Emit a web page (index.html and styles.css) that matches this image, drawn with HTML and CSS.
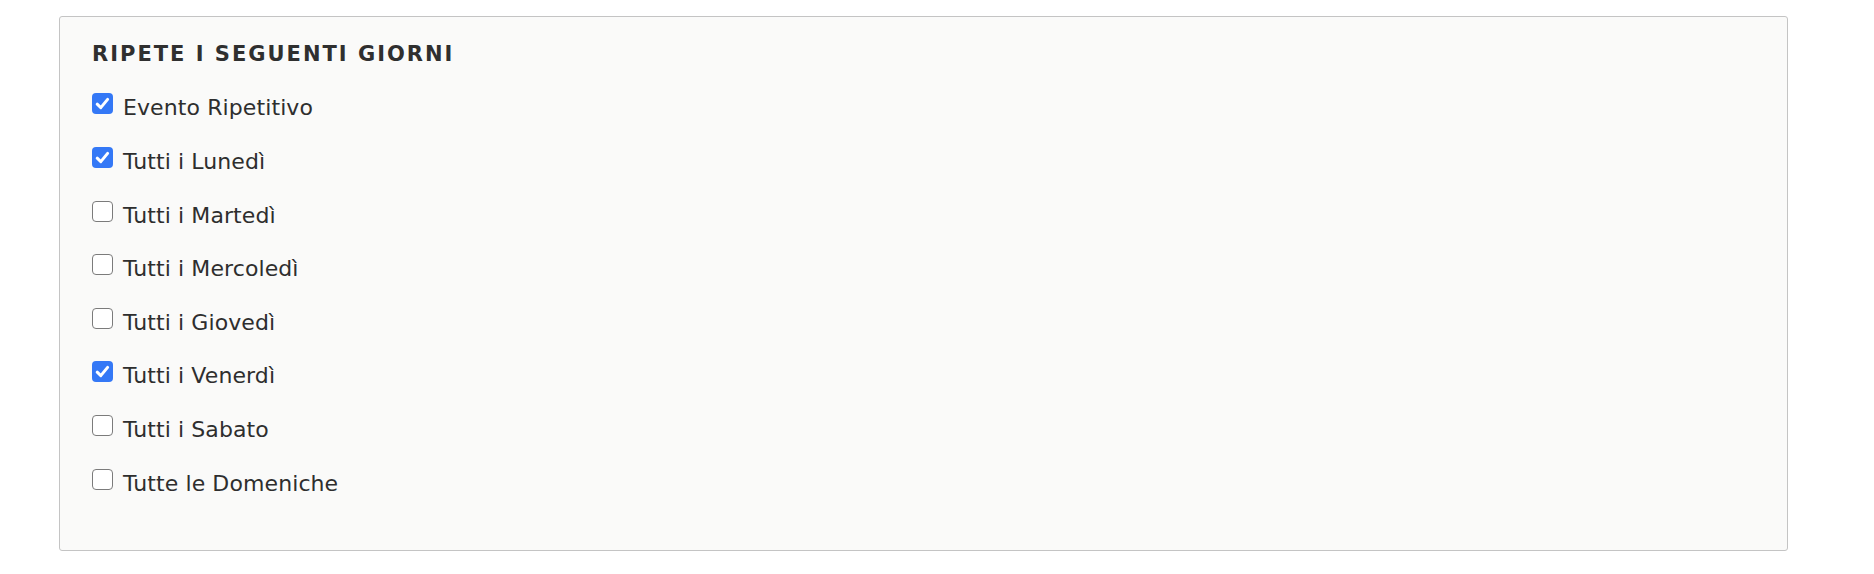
FILE: index.html
```html
<!DOCTYPE html>
<html lang="it">
<head>
<meta charset="utf-8">
<title>Ripete i seguenti giorni</title>
<link rel="stylesheet" href="styles.css">
</head>
<body>
<section class="panel">
  <h2 class="panel-title">RIPETE I SEGUENTI GIORNI</h2>
  <ul class="options">
    <li class="option"><span class="box checked"><svg viewBox="0 0 21 21" width="21" height="21"><path d="M5.2 11.2 L8.8 14.6 L15.6 6.4" fill="none" stroke="#fff" stroke-width="3" stroke-linecap="round" stroke-linejoin="round"/></svg></span><span class="label">Evento Ripetitivo</span></li>
    <li class="option"><span class="box checked"><svg viewBox="0 0 21 21" width="21" height="21"><path d="M5.2 11.2 L8.8 14.6 L15.6 6.4" fill="none" stroke="#fff" stroke-width="3" stroke-linecap="round" stroke-linejoin="round"/></svg></span><span class="label">Tutti i Lunedì</span></li>
    <li class="option"><span class="box"></span><span class="label">Tutti i Martedì</span></li>
    <li class="option"><span class="box"></span><span class="label">Tutti i Mercoledì</span></li>
    <li class="option"><span class="box"></span><span class="label">Tutti i Giovedì</span></li>
    <li class="option"><span class="box checked"><svg viewBox="0 0 21 21" width="21" height="21"><path d="M5.2 11.2 L8.8 14.6 L15.6 6.4" fill="none" stroke="#fff" stroke-width="3" stroke-linecap="round" stroke-linejoin="round"/></svg></span><span class="label">Tutti i Venerdì</span></li>
    <li class="option"><span class="box"></span><span class="label">Tutti i Sabato</span></li>
    <li class="option"><span class="box"></span><span class="label">Tutte le Domeniche</span></li>
  </ul>
</section>
</body>
</html>
```
FILE: styles.css
```css
html, body {
  margin: 0;
  padding: 0;
  background: #ffffff;
}

body {
  font-family: "DejaVu Sans", "Liberation Sans", sans-serif;
  color: #333333;
  padding: 16px 0 0 59px;
}

.panel {
  box-sizing: border-box;
  width: 1729px;
  height: 535px;
  border: 1px solid #c4c4c4;
  border-radius: 3px;
  background: #fafaf9;
  padding: 25px 32px 0 32px;
}

.panel-title {
  margin: 0 0 28.4px 0;
  font-size: 21px;
  line-height: 24px;
  font-weight: bold;
  letter-spacing: 2px;
  color: #2f2f2f;
}

.options {
  list-style: none;
  margin: 0;
  padding: 0;
  display: flex;
  flex-direction: column;
  gap: 27.6px;
}

.option {
  display: flex;
  align-items: flex-start;
  gap: 10px;
  height: 26px;
  font-size: 22px;
  line-height: 26px;
}

.box {
  box-sizing: border-box;
  flex: 0 0 auto;
  width: 21px;
  height: 21px;
  margin-top: -1px;
  border: 1.5px solid #7b7b7b;
  border-radius: 4px;
  background: #ffffff;
  display: flex;
  align-items: center;
  justify-content: center;
}

.box.checked {
  border: none;
  background: #3478f6;
}

.box svg {
  display: block;
}

.label {
  color: #2e2e2e;
  padding-top: 1px;
  letter-spacing: 0.1px;
}
```
